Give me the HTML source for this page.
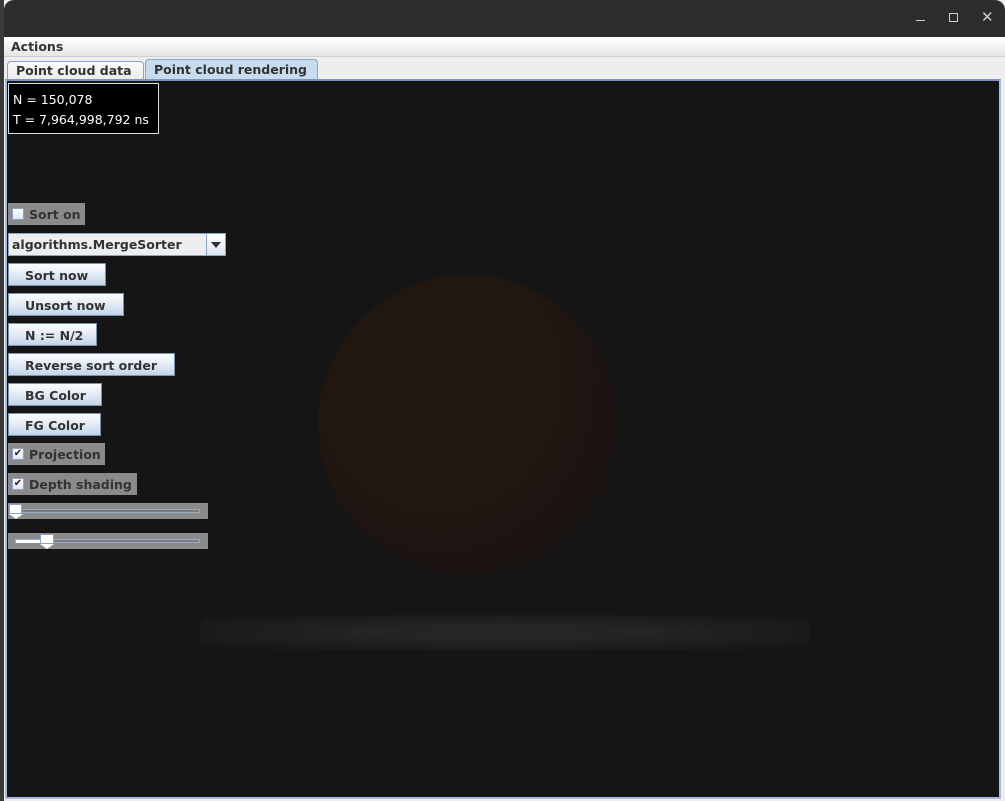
<!DOCTYPE html>
<html><head><style>
*{margin:0;padding:0;box-sizing:border-box}
body{width:1005px;height:801px;background:#3a3a3a;position:relative;overflow:hidden;font-family:"DejaVu Sans","Liberation Sans",sans-serif}
.win{position:absolute;left:4px;top:0;width:1001px;height:801px;background:#eeeeee}
.title{position:absolute;left:0;top:0;width:1001px;height:37px;background:#2c2c2c;border-radius:10px 10px 0 0}
.menu{position:absolute;left:0;top:37px;width:1001px;height:20px;background:linear-gradient(#fff,#e6e6e6);border-bottom:1px solid #cfcfcf;font-weight:bold;font-size:12.5px;color:#333;padding:2px 0 0 7px}
.tab{position:absolute;top:61px;height:19px;font-weight:bold;font-size:12.5px;color:#333;padding:1px 0 0 8px;border:1px solid #8da3c6;border-bottom:none;border-radius:4px 4px 0 0;white-space:nowrap}
.panel{position:absolute;left:5px;top:79px;width:996px;height:720px;border:2px solid #a9bbd8;border-top-color:#7d93c0;background:#151515}
.abs{position:absolute}
.btn{position:absolute;left:8px;height:23px;border:1px solid #7c93b0;background:linear-gradient(#fdfdfe,#dce7f3 60%,#c3d4e8);font-weight:bold;font-size:12.5px;color:#333;padding-left:16px;line-height:23px;white-space:nowrap}
.chk{position:absolute;left:8px;height:22px;background:#8a8a8a;font-weight:bold;font-size:12.5px;color:#333;line-height:23px;padding-left:21px;white-space:nowrap}
.chk i{position:absolute;left:4px;top:5px;width:12px;height:12px;border:1px solid #8da3c6;background:linear-gradient(#fff,#dfe8f2);font-style:normal;font-size:10px;line-height:10px;text-align:center;color:#222}
.sl{position:absolute;left:8px;width:200px;height:16px;background:#8a8a8a}
.sl .tr{position:absolute;left:7px;top:6px;width:185px;height:4px;border:1px solid #9aabc4;background:#7d7d7d}
</style></head><body>
<div class="win">
<div class="title">
<div class="abs" style="left:912px;top:20px;width:9px;height:1px;background:#ccc"></div>
<div class="abs" style="left:945px;top:13px;width:9px;height:9px;border:1px solid #ccc"></div>
<div class="abs" style="left:977px;top:8px;color:#ccc;font-size:15px">✕</div>
</div>
<div class="menu">Actions</div>
<div class="tab" style="left:3px;width:137px;background:linear-gradient(#fafafa,#ececec)">Point cloud data</div>
<div class="tab" style="left:141px;width:173px;background:#c8dcf0;top:59px;height:21px;padding-top:2px">Point cloud rendering</div>
</div>
<div class="panel"></div>
<div class="abs" style="left:318px;top:275px;width:300px;height:300px;border-radius:50%;background:radial-gradient(ellipse at 40% 35%,#221812 0%,#221610 45%,#1b1413 70%,rgba(21,21,21,0) 100%)"></div>
<div class="abs" style="left:200px;top:615px;width:610px;height:35px;border-radius:12px;background:radial-gradient(ellipse,#262524 30%,#1c1b1b 70%,rgba(21,21,21,0) 100%)"></div>
<div class="abs" style="left:8px;top:83px;width:151px;height:51px;background:#000;border:1px solid #ddd;color:#fff;font-size:12.5px;padding:6px 0 0 4px;line-height:20px;white-space:nowrap">N = 150,078<br>T = 7,964,998,792 ns</div>
<div class="chk" style="top:203px;width:77px"><i></i>Sort on</div>
<div class="abs" style="left:8px;top:233px;width:218px;height:23px;border:1px solid #8da3c6;background:#eee;font-weight:bold;font-size:12.5px;color:#333;line-height:22px;padding-left:3px;white-space:nowrap">algorithms.MergeSorter
<div class="abs" style="left:197px;top:-1px;width:20px;height:23px;border:1px solid #8da3c6;background:linear-gradient(#fff,#dce6f0)"><div class="abs" style="left:4px;top:8px;border-left:5px solid transparent;border-right:5px solid transparent;border-top:6px solid #333"></div></div></div>
<div class="btn" style="top:263px;width:98px">Sort now</div>
<div class="btn" style="top:293px;width:116px">Unsort now</div>
<div class="btn" style="top:323px;width:89px">N := N/2</div>
<div class="btn" style="top:353px;width:167px">Reverse sort order</div>
<div class="btn" style="top:383px;width:94px">BG Color</div>
<div class="btn" style="top:413px;width:93px">FG Color</div>
<div class="chk" style="top:443px;width:97px"><i>✔</i>Projection</div>
<div class="chk" style="top:473px;width:129px"><i>✔</i>Depth shading</div>
<div class="sl" style="top:503px"><div class="tr"></div><div class="abs" style="left:1px;top:1px;width:13px;height:10px;background:#fff;border:1px solid #8da3c6"></div><div class="abs" style="left:1px;top:11px;border-left:7px solid transparent;border-right:7px solid transparent;border-top:5px solid #fff"></div></div>
<div class="sl" style="top:533px"><div class="tr"></div><div class="abs" style="left:8px;top:7px;width:28px;height:3px;background:#fff"></div><div class="abs" style="left:32px;top:1px;width:14px;height:10px;background:#fff;border:1px solid #8da3c6"></div><div class="abs" style="left:32px;top:11px;border-left:7px solid transparent;border-right:7px solid transparent;border-top:5px solid #fff"></div></div>
</body></html>
